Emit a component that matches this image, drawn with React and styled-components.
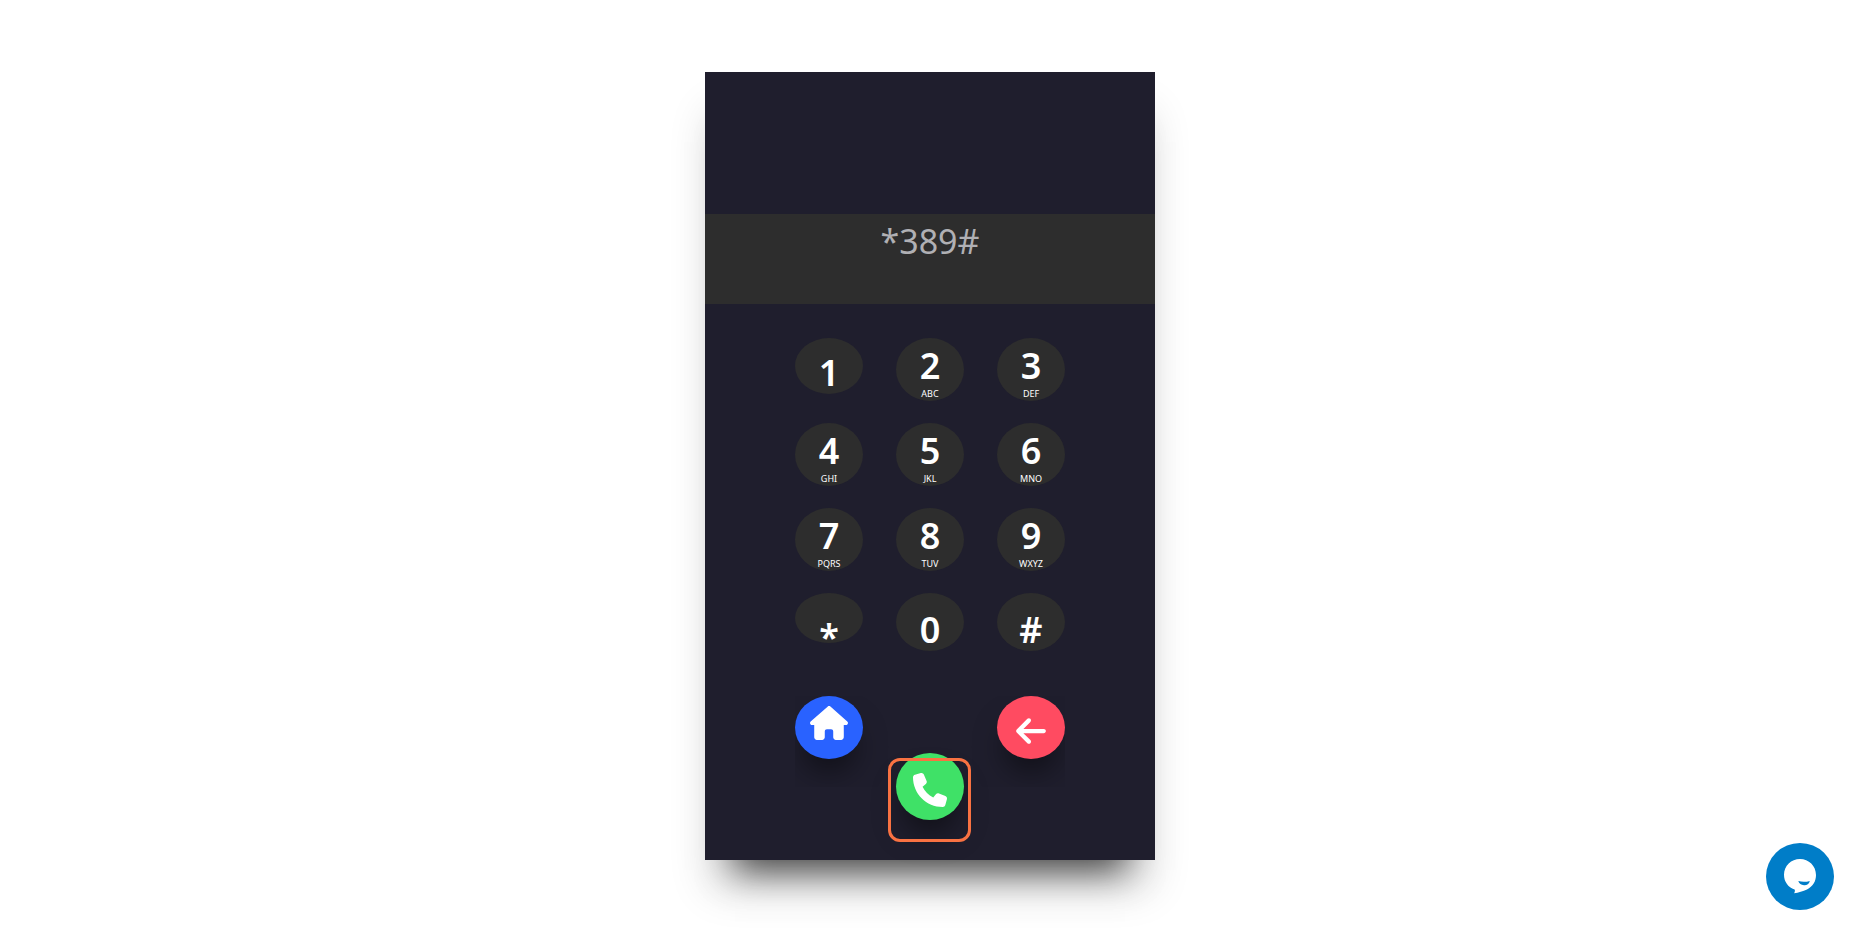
import React, { useState } from 'react';
import styled, { createGlobalStyle } from 'styled-components';
import { FaHouse, FaArrowLeft, FaPhone } from 'react-icons/fa6';

const GlobalStyle = createGlobalStyle`
  *, *::before, *::after { box-sizing: border-box; }
  body {
    margin: 0;
    background: #fff;
    font-family: 'Noto Sans', 'Open Sans', sans-serif;
  }
  button, input { font-family: inherit; border: 0; }
`;

const Page = styled.main`
  display: flex;
  align-items: center;
  justify-content: center;
  min-height: 100vh;
`;

const Phone = styled.section`
  display: flex;
  flex-direction: column;
  align-items: center;
  width: 100%;
  max-width: 450px;
  padding: 142px 0 40px;
  background: #1f1e2d;
  box-shadow:
    0 34px 40px -6px rgba(0, 0, 0, 0.16),
    0 40px 34px -30px rgba(0, 0, 0, 0.7);
`;

const Display = styled.input`
  width: 100%;
  padding: 7px 16px 43px;
  height: 90px;
  background: #2d2d2d;
  color: #b0b0b4;
  font-size: 34px;
  line-height: 40px;
  text-align: center;
  outline: none;
`;

const Keypad = styled.div`
  display: grid;
  grid-template-columns: repeat(3, 68px);
  justify-content: space-between;
  align-items: start;
  row-gap: 22px;
  width: 60%;
  margin-top: 34px;
`;

const Key = styled.button`
  display: flex;
  flex-direction: column;
  align-items: center;
  height: ${({ $height }) => $height}px;
  padding: ${({ $top }) => $top}px 0 0;
  border-radius: 50%;
  background: #2d2d2d;
  color: #fff;
  cursor: pointer;
`;

const Digit = styled.span`
  font-size: 36px;
  font-weight: 600;
  line-height: 36px;
`;

const Letters = styled.span`
  margin-top: 4px;
  font-size: 9px;
  line-height: 12px;
`;

const Actions = styled.div`
  display: flex;
  justify-content: space-between;
  align-items: flex-start;
  width: 60%;
  margin-top: 45px;
`;

const RoundButton = styled.button`
  display: flex;
  align-items: center;
  justify-content: center;
  width: 68px;
  height: 63px;
  padding: ${({ $pad }) => $pad};
  border-radius: 50%;
  background: ${({ $color }) => $color};
  color: #fff;
  font-size: ${({ $icon }) => $icon || 34}px;
  cursor: pointer;
  box-shadow: 0 20px 30px -8px rgba(0, 0, 0, 0.5);
  clip-path: ${({ $clip }) => $clip || 'none'};

  svg { flex: none; }
`;

const CallButton = styled(RoundButton)`
  position: relative;
  height: 67px;
  margin-top: 57px;
  outline: none;

  &::after {
    content: '';
    position: absolute;
    top: 5px;
    left: -8px;
    width: 83px;
    height: 84px;
    border: 3px solid #f97242;
    border-radius: 12px;
  }
`;

const ChatButton = styled.button`
  position: fixed;
  right: 26px;
  bottom: 22px;
  width: 68px;
  height: 67px;
  padding: 0;
  border-radius: 50%;
  background: #007dc8;
  cursor: pointer;

  svg { display: block; }
`;

const lettered = { height: 63, top: 10 };

const KEYS = [
  { digit: '1', height: 56, top: 17 },
  { digit: '2', letters: 'ABC', ...lettered },
  { digit: '3', letters: 'DEF', ...lettered },
  { digit: '4', letters: 'GHI', ...lettered },
  { digit: '5', letters: 'JKL', ...lettered },
  { digit: '6', letters: 'MNO', ...lettered },
  { digit: '7', letters: 'PQRS', ...lettered },
  { digit: '8', letters: 'TUV', ...lettered },
  { digit: '9', letters: 'WXYZ', ...lettered },
  { digit: '*', height: 50, top: 26 },
  { digit: '0', height: 58, top: 19 },
  { digit: '#', height: 58, top: 19 },
];

export default function App() {
  const [number, setNumber] = useState('*389#');

  return (
    <>
      <GlobalStyle />
      <Page>
        <Phone>
          <Display
            aria-label="Number"
            value={number}
            onChange={(e) => setNumber(e.target.value)}
          />
          <Keypad>
            {KEYS.map(({ digit, letters, height, top }) => (
              <Key
                key={digit}
                type="button"
                $height={height}
                $top={top}
                onClick={() => setNumber(number + digit)}
              >
                <Digit>{digit}</Digit>
                {letters && <Letters>{letters}</Letters>}
              </Key>
            ))}
          </Keypad>
          <Actions>
            <RoundButton
              type="button"
              aria-label="Home"
              $color="#2962ff"
              $icon={38}
              $pad="0 0 9px"
              $clip="inset(0 -40px -28px 0)"
            >
              <FaHouse />
            </RoundButton>
            <CallButton type="button" aria-label="Call" $color="#3fe167" $pad="7px 0 0">
              <FaPhone />
            </CallButton>
            <RoundButton
              type="button"
              aria-label="Delete"
              $color="#ff4b61"
              $pad="6px 0 0"
              $clip="inset(0 0 -28px -40px)"
              onClick={() => setNumber(number.slice(0, -1))}
            >
              <FaArrowLeft />
            </RoundButton>
          </Actions>
        </Phone>
      </Page>
      <ChatButton type="button" aria-label="Open chat">
        <svg width="68" height="67" viewBox="0 0 68 67" aria-hidden="true">
          <path
            d="M34 16C25.2 16 18 22.8 18 31.7C18 38.7 22 44 28.6 46.6C29.2 47.6 28.9 48.8 28.2 50.2C32.5 49.5 37 48.3 41 46.4C46.8 43.6 50 38.4 50 32C50 22.8 42.8 16 34 16Z"
            fill="#fff"
          />
          <path
            d="M32.3 38C36 39 40 39 43.8 37.9C43 41 40.8 42.4 38 42.2C35.2 42 33 40.6 32.3 38Z"
            fill="#007dc8"
          />
        </svg>
      </ChatButton>
    </>
  );
}
